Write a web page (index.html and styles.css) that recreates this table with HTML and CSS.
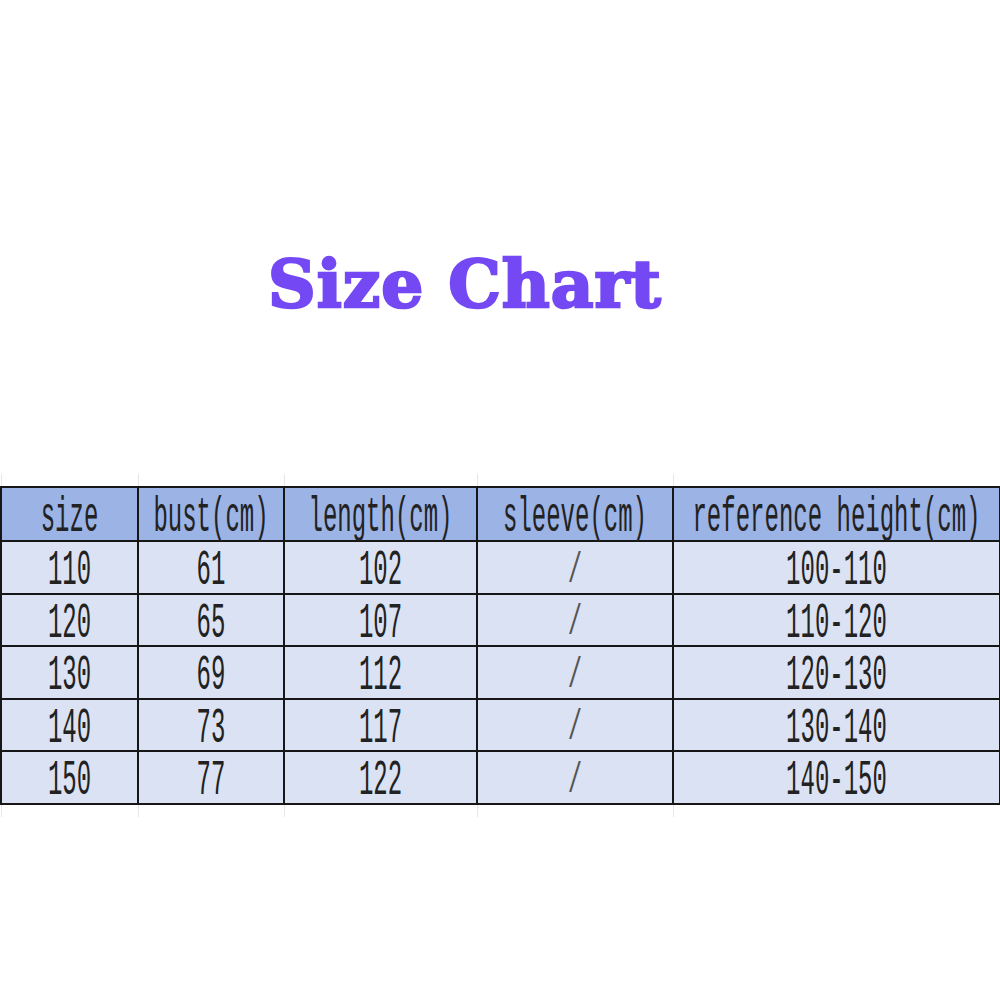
FILE: index.html
```html
<!DOCTYPE html>
<html>
<head>
<meta charset="utf-8">
<link rel="stylesheet" href="styles.css">
</head>
<body>
<div class="page">
  <h1 class="title">Size Chart</h1>
  <table class="chart">
    <colgroup>
      <col class="c1"><col class="c2"><col class="c3"><col class="c4"><col class="c5">
    </colgroup>
    <tr class="grid"><td></td><td></td><td></td><td></td><td></td></tr>
    <tr class="head">
      <td><span>size</span></td><td><span>bust(cm)</span></td><td><span>length(cm)</span></td><td><span>sleeve(cm)</span></td><td><span>reference height(cm)</span></td>
    </tr>
    <tr class="row"><td><span>110</span></td><td><span>61</span></td><td><span>102</span></td><td><span class="slash">/</span></td><td><span>100-110</span></td></tr>
    <tr class="row"><td><span>120</span></td><td><span>65</span></td><td><span>107</span></td><td><span class="slash">/</span></td><td><span>110-120</span></td></tr>
    <tr class="row"><td><span>130</span></td><td><span>69</span></td><td><span>112</span></td><td><span class="slash">/</span></td><td><span>120-130</span></td></tr>
    <tr class="row"><td><span>140</span></td><td><span>73</span></td><td><span>117</span></td><td><span class="slash">/</span></td><td><span>130-140</span></td></tr>
    <tr class="row"><td><span>150</span></td><td><span>77</span></td><td><span>122</span></td><td><span class="slash">/</span></td><td><span>140-150</span></td></tr>
    <tr class="grid bottom"><td></td><td></td><td></td><td></td><td></td></tr>
  </table>
</div>
</body>
</html>
```

FILE: styles.css
```css
html, body {
  margin: 0;
  padding: 0;
  background: #ffffff;
}

.page {
  width: 1000px;
  height: 1000px;
  padding-top: 244px;
  box-sizing: border-box;
}

.title {
  margin: 0;
  height: 230px;
  padding-left: 268px;
  font-family: "DejaVu Serif", serif;
  font-weight: 900;
  font-size: 66px;
  line-height: 80px;
  color: #7449f4;
  letter-spacing: 1px;
  -webkit-text-stroke: 2.5px #7449f4;
}

.chart {
  border-collapse: collapse;
  table-layout: fixed;
  width: 999px;
  font-family: "Liberation Mono", monospace;
  color: #222222;
}

.c1 { width: 137px; }
.c2 { width: 146px; }
.c3 { width: 193px; }
.c4 { width: 196px; }
.c5 { width: 327px; }

.chart td {
  padding: 0;
  text-align: center;
  vertical-align: middle;
  white-space: nowrap;
}

.grid td {
  height: 12px;
  border-left: 1px solid #e6e6e6;
}

.head td,
.row td {
  border: 2px solid #161616;
}

.head td {
  height: 52px;
  background: #9cb3e6;
}

.row td {
  height: 50.5px;
  background: #dbe2f3;
}

.chart span {
  display: inline-block;
  font-size: 24px;
  line-height: 24px;
  transform: translateY(5px) scaleY(2.05);
  transform-origin: center;
}

.chart .slash {
  font-size: 24px;
  line-height: 19px;
  color: #555;
  transform: translateY(4px) scaleY(1.75);
}
```
